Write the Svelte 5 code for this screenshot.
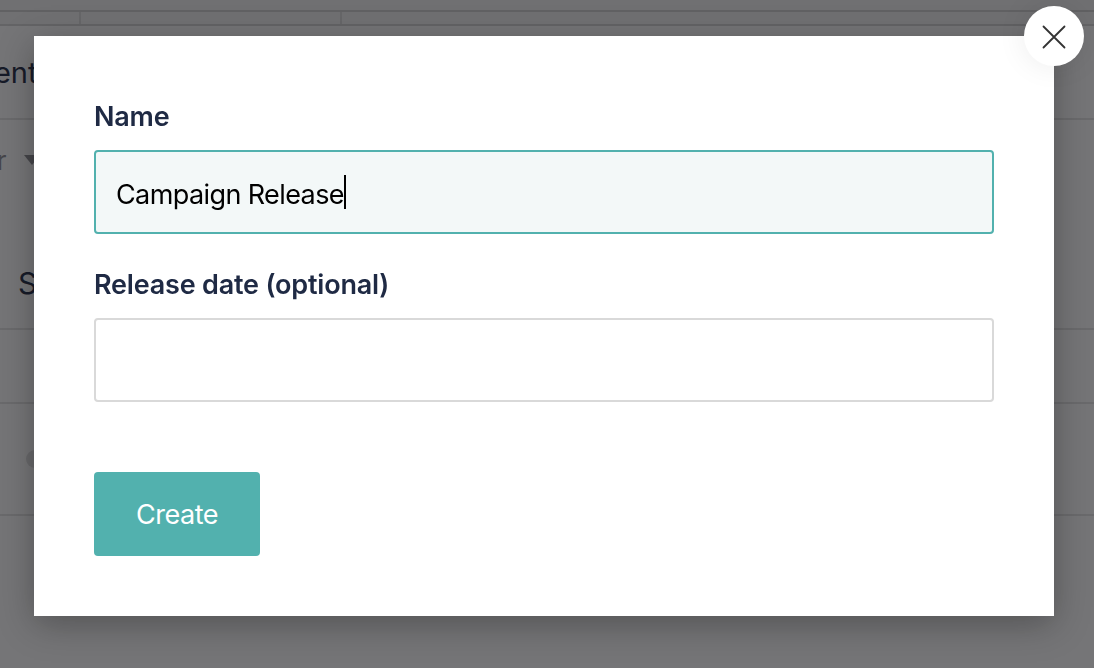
<script>
  let name = $state('Campaign Release');
  let releaseDate = $state('');
</script>

<div class="page">
  <div class="topbar"></div>
  <div class="tabs">
    <div class="tab"></div>
    <div class="tab wide"></div>
  </div>
  <div class="heading-row">
    <span class="heading">Content</span>
  </div>
  <div class="filter-row">
    <span class="filter">Filter</span>
    <span class="caret"></span>
  </div>
  <div class="table-head">
    <span class="status">Status</span>
  </div>
  <div class="table-row"></div>
  <div class="table-row tall">
    <span class="dot"></span>
  </div>
</div>

<div class="overlay">
  <div class="modal">
    <button class="close" aria-label="Close">
      <svg width="24" height="24" viewBox="0 0 24 24" fill="none" stroke="#333" stroke-width="1.8" stroke-linecap="round">
        <path d="M1.5 1.5 L22.5 22.5 M22.5 1.5 L1.5 22.5" />
      </svg>
    </button>
    <form onsubmit={(e) => e.preventDefault()}>
      <label for="name">Name</label>
      <div class="input focused" id="name">
        <span>{name}</span><span class="cursor"></span>
      </div>
      <label for="release-date">Release date (optional)</label>
      <input id="release-date" type="text" bind:value={releaseDate} />
      <button class="submit" type="submit">Create</button>
    </form>
  </div>
</div>

<style>
  :global(body) {
    margin: 0;
    font-family: Inter, "Liberation Sans", sans-serif;
    background: #fff;
    overflow: hidden;
  }
  .page {
    height: 668px;
    background: #fff;
    color: #1f2a44;
    display: flex;
    flex-direction: column;
  }
  .topbar {
    height: 10px;
    background: #f4f4f4;
    border-bottom: 2px solid #cfcfcf;
  }
  .tabs {
    height: 12px;
    display: flex;
    background: #f4f4f4;
    border-bottom: 2px solid #d6d6d6;
  }
  .tab {
    width: 79px;
    border-right: 2px solid #ddd;
  }
  .tab.wide {
    width: 259px;
  }
  .heading-row {
    height: 92px;
    border-bottom: 2px solid #e4e4e4;
    display: flex;
    align-items: center;
  }
  .heading {
    font-size: 29px;
    margin-left: -71px;
  }
  .filter-row {
    height: 80px;
    display: flex;
    align-items: center;
    gap: 17px;
  }
  .filter {
    font-size: 26px;
    margin-left: -55px;
    color: #8f8f94;
  }
  .caret {
    border-left: 8px solid transparent;
    border-right: 8px solid transparent;
    border-top: 10px solid #8f8f94;
  }
  .table-head {
    height: 90px;
    padding-top: 38px;
    border-bottom: 2px solid #e4e4e4;
    display: flex;
    align-items: center;
  }
  .status {
    font-size: 30px;
    margin-left: 18px;
  }
  .table-row {
    height: 72px;
    border-bottom: 2px solid #e4e4e4;
  }
  .table-row.tall {
    height: 110px;
    display: flex;
    align-items: center;
  }
  .dot {
    width: 18px;
    height: 18px;
    margin-left: 26px;
    border-radius: 50%;
    background: #e2e2e2;
  }
  .overlay {
    position: fixed;
    inset: 0;
    background: rgba(17, 17, 20, 0.58);
  }
  .modal {
    position: absolute;
    left: 34px;
    top: 36px;
    width: 1020px;
    height: 580px;
    box-sizing: border-box;
    padding: 61px 60px 60px;
    background: #fff;
    box-shadow: 0 8px 34px rgba(0, 0, 0, 0.3);
  }
  .close {
    position: absolute;
    top: -30px;
    right: -30px;
    width: 60px;
    height: 60px;
    padding: 2px 0 0;
    border: none;
    border-radius: 50%;
    background: #fff;
    display: flex;
    align-items: center;
    justify-content: center;
    box-shadow: 0 0 30px rgba(0, 0, 0, 0.08);
  }
  form {
    display: flex;
    flex-direction: column;
    align-items: flex-start;
  }
  label {
    font-size: 27px;
    font-weight: 600;
    letter-spacing: -0.2px;
    line-height: 40px;
    color: #1f2a44;
    margin-bottom: 13px;
  }
  .input,
  input {
    box-sizing: border-box;
    width: 900px;
    height: 84px;
    padding: 0 20px;
    border-radius: 4px;
    font-family: inherit;
    font-size: 27px;
    letter-spacing: -0.6px;
    color: #000;
    outline: none;
  }
  .input {
    border: 2px solid #52b1ae;
    background: #f3f8f8;
    display: flex;
    align-items: center;
    margin-bottom: 31px;
    padding-top: 4px;
  }
  input {
    border: 2px solid #d9d9d9;
    background: #fff;
  }
  .cursor {
    width: 2px;
    height: 34px;
    margin-top: -4px;
    background: #000;
  }
  .submit {
    margin-top: 70px;
    width: 166px;
    height: 84px;
    border: none;
    border-radius: 4px;
    background: #52b1ae;
    color: #fff;
    font-family: inherit;
    font-size: 27px;
    letter-spacing: -0.5px;
  }
</style>
